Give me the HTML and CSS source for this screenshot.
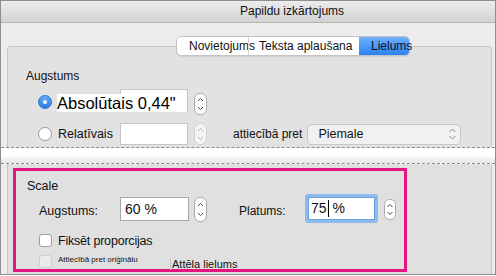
FILE: index.html
```html
<!DOCTYPE html>
<html lang="lv">
<head>
    <meta charset="UTF-8">
    <title>Papildu izkārtojums</title>
    <link rel="stylesheet" href="styles.css">
</head>
<body>

<div class="window">
    <div class="titlebar">Papildu izkārtojums</div>

    <div class="content">
        <!-- Cilnes -->
        <div class="tabs">
            <div class="tab tab-first">Novietojums</div>
            <div class="tab tab-mid">Teksta aplaušana</div>
            <div class="tab tab-active">Lielums</div>
        </div>

        <div class="panel">
            <div class="group-title">Augstums</div>

            <div class="row row-abs">
                <span class="radio radio-on"></span>
                <div class="field field-abs">
                    <span class="big-label">Absolūtais 0,44"</span>
                </div>
                <svg class="stepper stepper-tall" width="13" height="22" viewBox="0 0 13 22">
                    <rect x="0.5" y="0.5" width="12" height="21" rx="5.5" fill="#fff" stroke="#a9a9a9"/>
                    <path d="M4 8 L6.5 5.5 L9 8" fill="none" stroke="#444" stroke-width="1"/>
                    <path d="M4 14 L6.5 16.5 L9 14" fill="none" stroke="#444" stroke-width="1"/>
                </svg>
            </div>

            <div class="row row-rel">
                <span class="radio"></span>
                <span class="rel-label">Relatīvais</span>
                <div class="field field-rel"></div>
                <svg class="stepper" width="13" height="22" viewBox="0 0 13 22">
                    <rect x="0.5" y="0.5" width="12" height="21" rx="5.5" fill="#f4f4f4" stroke="#cfcfcf"/>
                    <path d="M4 8 L6.5 5.5 L9 8" fill="none" stroke="#b5b5b5" stroke-width="1"/>
                    <path d="M4 14 L6.5 16.5 L9 14" fill="none" stroke="#b5b5b5" stroke-width="1"/>
                </svg>
                <span class="rel-to">attiecībā pret</span>
                <div class="select">
                    <span>Piemale</span>
                    <svg width="9" height="14" viewBox="0 0 9 14">
                        <path d="M1.5 5 L4.5 2 L7.5 5" fill="none" stroke="#8a8a8a" stroke-width="1"/>
                        <path d="M1.5 9 L4.5 12 L7.5 9" fill="none" stroke="#8a8a8a" stroke-width="1"/>
                    </svg>
                </div>
            </div>
        </div>

        <div class="band"></div>

        <div class="lower">
            <div class="scale-box">
                <div class="scale-title">Scale</div>

                <div class="scale-row">
                    <span class="scale-label">Augstums:</span>
                    <div class="pct-field">60 %</div>
                    <svg class="stepper-s" width="13" height="25" viewBox="0 0 13 25">
                        <rect x="0.5" y="0.5" width="12" height="24" rx="5.5" fill="#fff" stroke="#a9a9a9"/>
                        <path d="M4 9 L6.5 6.5 L9 9" fill="none" stroke="#444" stroke-width="1"/>
                        <path d="M4 16 L6.5 18.5 L9 16" fill="none" stroke="#444" stroke-width="1"/>
                    </svg>
                    <span class="width-label">Platums:</span>
                    <div class="focus-ring">
                        <div class="pct-focus">75<span class="caret"></span>&nbsp;%</div>
                    </div>
                    <svg class="stepper-r" width="12" height="21" viewBox="0 0 12 21">
                        <rect x="0.5" y="0.5" width="11" height="20" rx="5" fill="#fff" stroke="#a9a9a9"/>
                        <path d="M3.5 8 L6 5.5 L8.5 8" fill="none" stroke="#444" stroke-width="1"/>
                        <path d="M3.5 13 L6 15.5 L8.5 13" fill="none" stroke="#444" stroke-width="1"/>
                    </svg>
                </div>

                <div class="check-row">
                    <span class="checkbox"></span>
                    <span class="check-label">Fiksēt proporcijas</span>
                </div>

                <div class="check-row check-row-2">
                    <span class="checkbox checkbox-off"></span>
                    <span class="tiny-label">Attiecībā pret oriģinālu</span>
                    <span class="size-label">Attēla lielums</span>
                </div>
            </div>
        </div>
    </div>
</div>

</body>
</html>
```

FILE: styles.css
```css
body {
    margin: 0;
    background-color: #ffffff;
    font-family: "Liberation Sans", Arial, sans-serif;
    color: #111;
}

.window {
    width: 496px;
    height: 275px;
    box-sizing: border-box;
    border: 1px solid #8e8e8e;
    display: flex;
    flex-direction: column;
    background-color: #ececec;
}

.titlebar {
    height: 21px;
    line-height: 21px;
    border-bottom: 1px solid #b4b4b4;
    background: linear-gradient(#ececec, #d2d2d2);
    font-size: 12px;
    padding-left: 239px;
}

.content {
    flex: 1;
    display: flex;
    flex-direction: column;
}

/* Cilnes */
.tabs {
    position: relative;
    z-index: 1;
    display: flex;
    margin: 13px 0 0 175px;
    width: 234px;
    height: 20px;
    box-sizing: border-box;
    border: 1px solid #c4c4c4;
    border-radius: 5px;
    background-color: #fff;
    box-shadow: 0 1px 1px rgba(0, 0, 0, 0.08);
    font-size: 12px;
}

.tab {
    height: 18px;
    line-height: 18px;
    white-space: nowrap;
    box-sizing: border-box;
}

.tab-first {
    width: 71px;
    padding-left: 12px;
}

.tab-mid {
    width: 111px;
    border-left: 1px solid #d6d6d6;
    padding-left: 10px;
}

.tab-active {
    width: 50px;
    padding-left: 12px;
    background: linear-gradient(#6eb0fb, #2b83f1);
    border-radius: 0 4px 4px 0;
    color: #101030;
}

/* Panelis */
.panel {
    margin: -10px 3px 0 6px;
    height: 101px;
    box-sizing: border-box;
    border: 1px solid #c6c6c6;
    border-bottom: none;
    border-radius: 4px 4px 0 0;
    background-color: #e2e2e2;
    padding: 22px 0 0 18px;
}

.group-title {
    font-size: 12px;
    line-height: 14px;
}

.row {
    display: flex;
    align-items: center;
}

.row-abs {
    height: 26px;
    margin-top: 6px;
}

.row-rel {
    height: 22px;
    margin-top: 8px;
}

.radio {
    width: 14px;
    height: 14px;
    box-sizing: border-box;
    border-radius: 50%;
    border: 1px solid #9c9c9c;
    background-color: #fff;
    margin-left: 12px;
    position: relative;
}

.radio-on {
    border-color: #2b74d6;
    background: linear-gradient(#62a7f8, #2e7ce8);
}

.radio-on::after {
    content: "";
    position: absolute;
    left: 4px;
    top: 4px;
    width: 4px;
    height: 4px;
    border-radius: 50%;
    background-color: #fff;
}

.field {
    width: 68px;
    box-sizing: border-box;
    border: 1px solid #c6c6c6;
    background-color: #fff;
}

.field-abs {
    position: relative;
    align-self: flex-start;
    height: 23px;
    margin-left: 68px;
}

.big-label {
    position: absolute;
    left: -64px;
    top: 4px;
    width: 130px;
    height: 18px;
    line-height: 18px;
    background-color: #fff;
    font-size: 16.5px;
    white-space: nowrap;
    color: #000;
}

.stepper {
    margin-left: 6px;
}

.stepper-tall {
    align-self: flex-end;
}

.rel-label {
    width: 62px;
    margin-left: 6px;
    font-size: 12.5px;
}

.field-rel {
    height: 22px;
}

.rel-to {
    margin-left: 26px;
    font-size: 12px;
}

.select {
    margin-left: 5px;
    width: 154px;
    height: 21px;
    box-sizing: border-box;
    border: 1px solid #c8c8c8;
    border-radius: 4px;
    background-color: #f1f1f1;
    display: flex;
    align-items: center;
    justify-content: space-between;
    padding: 0 3px 0 10px;
    font-size: 12.5px;
}

/* Josla starp sadaļām */
.band {
    height: 15px;
    border-top: 1px dashed #8c8c8c;
    border-bottom: 1px dashed #8c8c8c;
    background: linear-gradient(#ffffff 45%, #e6e6e6);
}

.lower {
    flex: 1;
    margin: 0 3px 0 6px;
    border-left: 1px solid #c6c6c6;
    border-right: 1px solid #c6c6c6;
    background-color: #e0e0e0;
    padding: 4px 0 0 5px;
}

.scale-box {
    width: 394px;
    height: 104px;
    box-sizing: border-box;
    border: 3px solid #e6147f;
    padding: 8px 0 0 11px;
}

.scale-title {
    font-size: 12.5px;
    line-height: 14px;
}

.scale-row {
    display: flex;
    align-items: flex-start;
    height: 29px;
    margin: 1px 0 0 12px;
}

.scale-label {
    width: 81px;
    margin-top: 10px;
    font-size: 12.5px;
    line-height: 14px;
}

.pct-field {
    width: 69px;
    height: 24px;
    margin-top: 3px;
    box-sizing: border-box;
    border: 1px solid #a8a8a8;
    background-color: #fff;
    font-size: 14px;
    line-height: 22px;
    padding-left: 4px;
}

.stepper-s {
    margin: 3px 0 0 5px;
}

.width-label {
    width: 66px;
    margin: 10px 0 0 32px;
    font-size: 12px;
    line-height: 14px;
}

.focus-ring {
    width: 73px;
    height: 29px;
    box-sizing: border-box;
    border: 3px solid #8dbbee;
    border-radius: 3px;
}

.pct-focus {
    height: 23px;
    box-sizing: border-box;
    border: 1px solid #6d9fd8;
    background-color: #fff;
    font-size: 14px;
    line-height: 21px;
    padding-left: 2px;
    display: flex;
    align-items: center;
}

.caret {
    display: inline-block;
    width: 1px;
    height: 17px;
    margin-left: 1px;
    background-color: #000;
}

.stepper-r {
    margin: 5px 0 0 6px;
}

.check-row {
    display: flex;
    align-items: center;
    margin: 11px 0 0 12px;
    height: 13px;
}

.check-row-2 {
    margin-top: 8px;
}

.checkbox {
    width: 13px;
    height: 13px;
    box-sizing: border-box;
    border: 1px solid #9e9e9e;
    border-radius: 3px;
    background-color: #fff;
}

.checkbox-off {
    border-color: #cdcdcd;
    background-color: #ececec;
}

.check-label {
    margin-left: 6px;
    font-size: 12.5px;
    letter-spacing: -0.2px;
}

.tiny-label {
    margin: -4px 0 0 6px;
    font-size: 8px;
    width: 112px;
    white-space: nowrap;
}

.size-label {
    margin-top: 4px;
    padding-left: 1px;
    border-left: 1px solid #c4c4c4;
    font-size: 11px;
}
```
